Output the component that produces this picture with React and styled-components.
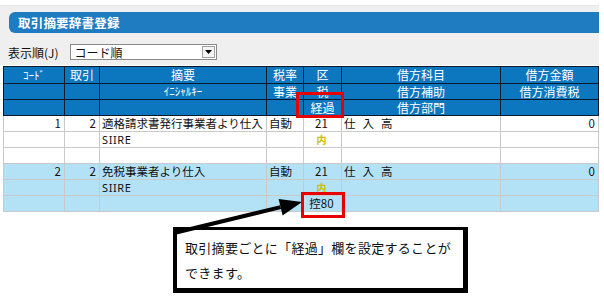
import React from "react";
import styled, { createGlobalStyle } from "styled-components";

const Global = createGlobalStyle`
  html, body { margin: 0; padding: 0; background: #fff; }
  body { font-family: "Noto Sans CJK JP", "Noto Sans", sans-serif; }
  * { box-sizing: border-box; }
`;

const COLS = "60px 34px 166px 36px 37px 158px 97px";

const Page = styled.div`
  position: relative;
  width: 604px;
  height: 306px;
  overflow: hidden;
  background: #fff;
`;

const Panel = styled.div`
  margin-top: 5px;
  width: 599px;
  height: 60px;
  padding-top: 6px;
  background: #efefef;
  border-top: 1px dotted #e2e2e2;
`;

const TitleBar = styled.div`
  margin-left: 9px;
  height: 21px;
  display: flex;
  align-items: center;
  padding-left: 9px;
  background: #1f7cc1;
  border-radius: 6px 0 0 6px;
  color: #fff;
  font-weight: bold;
  font-size: 12.5px;
  letter-spacing: 0.2px;
`;

const OrderRow = styled.div`
  margin-top: 11px;
  height: 16px;
  display: flex;
  align-items: center;
  padding-left: 8px;
  gap: 11px;
  font-size: 12px;
  color: #111;
`;

const Select = styled.div`
  width: 147px;
  height: 16px;
  background: #fff;
  border: 1px solid #8a8a8a;
  display: flex;
  align-items: center;
  justify-content: space-between;
  padding-left: 4px;
  padding-right: 1px;
  font-size: 12px;
`;

const SelectBtn = styled.div`
  width: 13px;
  height: 12px;
  border: 1px solid #a0a0a0;
  background: #f4f4f4;
  display: flex;
  align-items: center;
  justify-content: center;
`;

const HeadGrid = styled.div`
  margin-top: 1px;
  margin-left: 3px;
  display: grid;
  grid-template-columns: ${COLS};
  grid-template-rows: 16px 15px 15px;
  gap: 1px;
  padding: 1px;
  width: 596px;
  background: #0a1a2a;
`;

const HeadCell = styled.div`
  background: #0c76bf;
  color: #fff;
  font-size: ${(p) => (p.$small ? "11px" : "12px")};
  display: flex;
  align-items: center;
  justify-content: center;
  line-height: 1;
`;

const BodyGrid = styled.div`
  margin-left: 3px;
  display: grid;
  grid-template-columns: ${COLS};
  grid-template-rows: repeat(6, 15px);
  gap: 1px;
  padding: 0 1px 1px 1px;
  width: 596px;
  background: #c9c9c9;
`;

const Cell = styled.div`
  background: ${(p) => (p.$alt ? "#b3e2f7" : "#fff")};
  color: #111;
  font-size: 11.5px;
  line-height: 1;
  display: flex;
  align-items: center;
  white-space: nowrap;
  overflow: hidden;
  justify-content: ${(p) =>
    p.$align === "right" ? "flex-end" : p.$align === "center" ? "center" : "flex-start"};
  padding: 0 ${(p) => (p.$align === "right" ? "3px" : "2px")} 0
    ${(p) => (p.$align === "left" ? "2px" : "0")};
  letter-spacing: ${(p) => (p.$spaced ? "7px" : "0")};
`;

const Code = styled.span`
  font-family: "Noto Sans", "DejaVu Sans", sans-serif;
  font-size: 11px;
  letter-spacing: 0.6px;
`;

const Tag = styled.span`
  color: #c9bf00;
  font-size: 10px;
  font-weight: bold;
`;

const RedBox = styled.div`
  position: absolute;
  border: 3px solid #e60000;
  pointer-events: none;
`;

const Callout = styled.div`
  margin-left: 173px;
  margin-top: 15px;
  width: 295px;
  height: 66px;
  border: 4px solid #000;
  border-top-width: 3px;
  border-bottom-width: 5px;
  border-right-width: 5px;
  background: #fff;
  padding: 5px 0 0 8px;
  font-size: 13px;
  line-height: 25px;
  letter-spacing: 0.3px;
  color: #111;
`;

const ArrowSvg = styled.svg`
  position: absolute;
  left: 0;
  top: 0;
  pointer-events: none;
`;

const header = [
  ["ｺｰﾄﾞ", "取引", "摘要", "税率", "区", "借方科目", "借方金額"],
  ["", "", "ｲﾆｼｬﾙｷｰ", "事業", "税", "借方補助", "借方消費税"],
  ["", "", "", "", "経過", "借方部門", ""],
];

const blocks = [
  { code: "1", tori: "2", name: "適格請求書発行事業者より仕入", keika: "" },
  { code: "2", tori: "2", name: "免税事業者より仕入", keika: "控80" },
];

function Block({ b, alt }) {
  return (
    <>
      <Cell $alt={alt} $align="right">{b.code}</Cell>
      <Cell $alt={alt} $align="right">{b.tori}</Cell>
      <Cell $alt={alt} $align="left">{b.name}</Cell>
      <Cell $alt={alt} $align="left">自動</Cell>
      <Cell $alt={alt} $align="center">21</Cell>
      <Cell $alt={alt} $align="left" $spaced>仕入高</Cell>
      <Cell $alt={alt} $align="right">0</Cell>

      <Cell $alt={alt} />
      <Cell $alt={alt} />
      <Cell $alt={alt} $align="left"><Code>SIIRE</Code></Cell>
      <Cell $alt={alt} />
      <Cell $alt={alt} $align="center"><Tag>内</Tag></Cell>
      <Cell $alt={alt} />
      <Cell $alt={alt} />

      <Cell $alt={alt} />
      <Cell $alt={alt} />
      <Cell $alt={alt} />
      <Cell $alt={alt} />
      <Cell $alt={alt} $align="center">{b.keika}</Cell>
      <Cell $alt={alt} />
      <Cell $alt={alt} />
    </>
  );
}

export default function App() {
  const tip = [302, 202];
  const start = [174, 233];
  const dx = tip[0] - start[0];
  const dy = tip[1] - start[1];
  const len = Math.hypot(dx, dy);
  const ux = dx / len;
  const uy = dy / len;
  const bx = tip[0] - ux * 22;
  const by = tip[1] - uy * 22;
  const px = -uy * 8.5;
  const py = ux * 8.5;
  return (
    <Page>
      <Global />
      <Panel>
        <TitleBar>取引摘要辞書登録</TitleBar>
        <OrderRow>
          <span>表示順(J)</span>
          <Select>
            <span>コード順</span>
            <SelectBtn>
              <svg width="7" height="4" viewBox="0 0 7 4">
                <path d="M0 0H7L3.5 4Z" fill="#000" />
              </svg>
            </SelectBtn>
          </Select>
        </OrderRow>
      </Panel>
      <HeadGrid>
        {header.flatMap((row, r) =>
          row.map((t, c) => (
            <HeadCell key={`${r}-${c}`} $small={t === "ｲﾆｼｬﾙｷｰ" || t === "ｺｰﾄﾞ"}>
              {t}
            </HeadCell>
          ))
        )}
      </HeadGrid>
      <BodyGrid>
        <Block b={blocks[0]} alt={false} />
        <Block b={blocks[1]} alt={true} />
      </BodyGrid>
      <Callout>
        取引摘要ごとに「経過」欄を設定することが
        <br />
        できます。
      </Callout>
      <RedBox style={{ left: 296, top: 92, width: 48, height: 26 }} />
      <RedBox style={{ left: 301, top: 192, width: 44, height: 26 }} />
      <ArrowSvg width="604" height="306">
        <line x1={start[0]} y1={start[1]} x2={bx} y2={by} stroke="#000" strokeWidth="4" />
        <polygon
          points={`${tip[0]},${tip[1]} ${bx + px},${by + py} ${bx - px},${by - py}`}
          fill="#000"
        />
      </ArrowSvg>
    </Page>
  );
}
